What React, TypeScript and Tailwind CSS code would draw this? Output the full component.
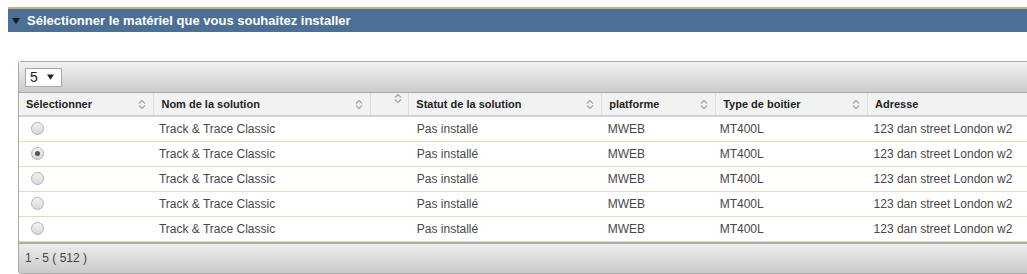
import React from "react";

const rows = [
  { selected: false },
  { selected: true },
  { selected: false },
  { selected: false },
  { selected: false },
];

function SortIcon() {
  return (
    <svg width="8" height="11" viewBox="0 0 8 11" aria-hidden="true">
      <path d="M1 4.5 L4 1.5 L7 4.5" fill="none" stroke="#a3a3a3" strokeWidth="1.2" />
      <path d="M1 6.5 L4 9.5 L7 6.5" fill="none" stroke="#a3a3a3" strokeWidth="1.2" />
    </svg>
  );
}

function Caret({ color, w, h }: { color: string; w: number; h: number }) {
  return (
    <svg width={w} height={h} viewBox="0 0 8 6" aria-hidden="true">
      <path d="M0 0 H8 L4 6 Z" fill={color} />
    </svg>
  );
}

function Radio({ checked }: { checked: boolean }) {
  return (
    <span className="inline-flex h-[13px] w-[13px] items-center justify-center rounded-full border border-[#b4b4b4] bg-gradient-to-b from-[#f2f2f2] to-[#d8d8d8]">
      {checked && <span className="h-[5px] w-[5px] rounded-full bg-[#555]" />}
    </span>
  );
}

const cols = [
  { label: "Sélectionner", w: "w-[135px]" },
  { label: "Nom de la solution", w: "w-[217px]" },
  { label: "", w: "w-[38px]" },
  { label: "Statut de la solution", w: "w-[193px]" },
  { label: "platforme", w: "w-[114px]" },
  { label: "Type de boitier", w: "w-[152px]" },
  { label: "Adresse", w: "w-[190px]" },
];

export default function App() {
  return (
    <div
      className="relative h-[274px] w-[1027px] overflow-hidden bg-white"
      style={{ fontFamily: '"Liberation Sans", Arial, sans-serif' }}
    >
      {/* Section title bar */}
      <div className="ml-2 mt-[7px] flex h-[25px] items-center border-t-2 border-[#c0b86c] bg-[#4b6f96] pl-[4px]">
        <Caret color="#1a1a1a" w={8} h={6} />
        <span className="ml-[7px] text-[13px] font-bold text-white">
          Sélectionner le matériel que vous souhaitez installer
        </span>
      </div>

      {/* Table panel */}
      <div className="ml-[18px] mt-[29px] w-[1040px] overflow-hidden rounded-l-[3px] border-l border-[#a8a8a8]">
        <div className="flex h-[32px] items-center border-t border-b border-[#a8a8a8] bg-gradient-to-b from-[#f2f2f2] to-[#cbcbcb] pl-[6px]">
          <div className="flex h-[19px] w-[37px] items-center justify-between border border-[#a9a9a9] bg-white pl-[4px] pr-[7px] text-[14px] text-[#222]">
            <span>5</span>
            <Caret color="#222" w={7} h={6} />
          </div>
        </div>

        <table className="table-fixed border-collapse text-left">
          <thead>
            <tr className="h-[22px] border-b-2 border-[#d2d2d2] bg-[#f1f3f2]">
              {cols.map((c, i) => (
                <th
                  key={i}
                  className={`${c.w} h-[22px] border-r border-[#dedede] p-0 align-middle text-[11px] font-bold text-[#222]`}
                >
                  {c.label ? (
                    <div className="flex items-center justify-between pl-[7px] pr-[7px]">
                      <span>{c.label}</span>
                      {i < 6 && <SortIcon />}
                    </div>
                  ) : (
                    <div className="flex h-[22px] items-start justify-end pr-[6px]">
                      <SortIcon />
                    </div>
                  )}
                </th>
              ))}
            </tr>
          </thead>
          <tbody className="text-[12px] text-[#474747]">
            {rows.map((r, i) => (
              <tr key={i} className="h-[25px] border-b border-[#e4dcb7]">
                <td className="p-0 pl-[12px] align-middle">
                  <div className="flex items-center">
                    <Radio checked={r.selected} />
                  </div>
                </td>
                <td className="p-0 pl-[5px]">Track &amp; Trace Classic</td>
                <td className="p-0" />
                <td className="p-0 pl-[8px]">Pas installé</td>
                <td className="p-0 pl-[6px]">MWEB</td>
                <td className="p-0 pl-[4px]">MT400L</td>
                <td className="p-0 pl-[6px]">123 dan street London w2</td>
              </tr>
            ))}
          </tbody>
        </table>

        <div className="flex h-[32px] items-center rounded-bl-[3px] border-t-2 border-b border-[#ababab] bg-gradient-to-b from-[#ececec] to-[#cacaca] pl-[6px] text-[12px] text-[#444]">
          1 - 5 ( 512 )
        </div>
      </div>
    </div>
  );
}
